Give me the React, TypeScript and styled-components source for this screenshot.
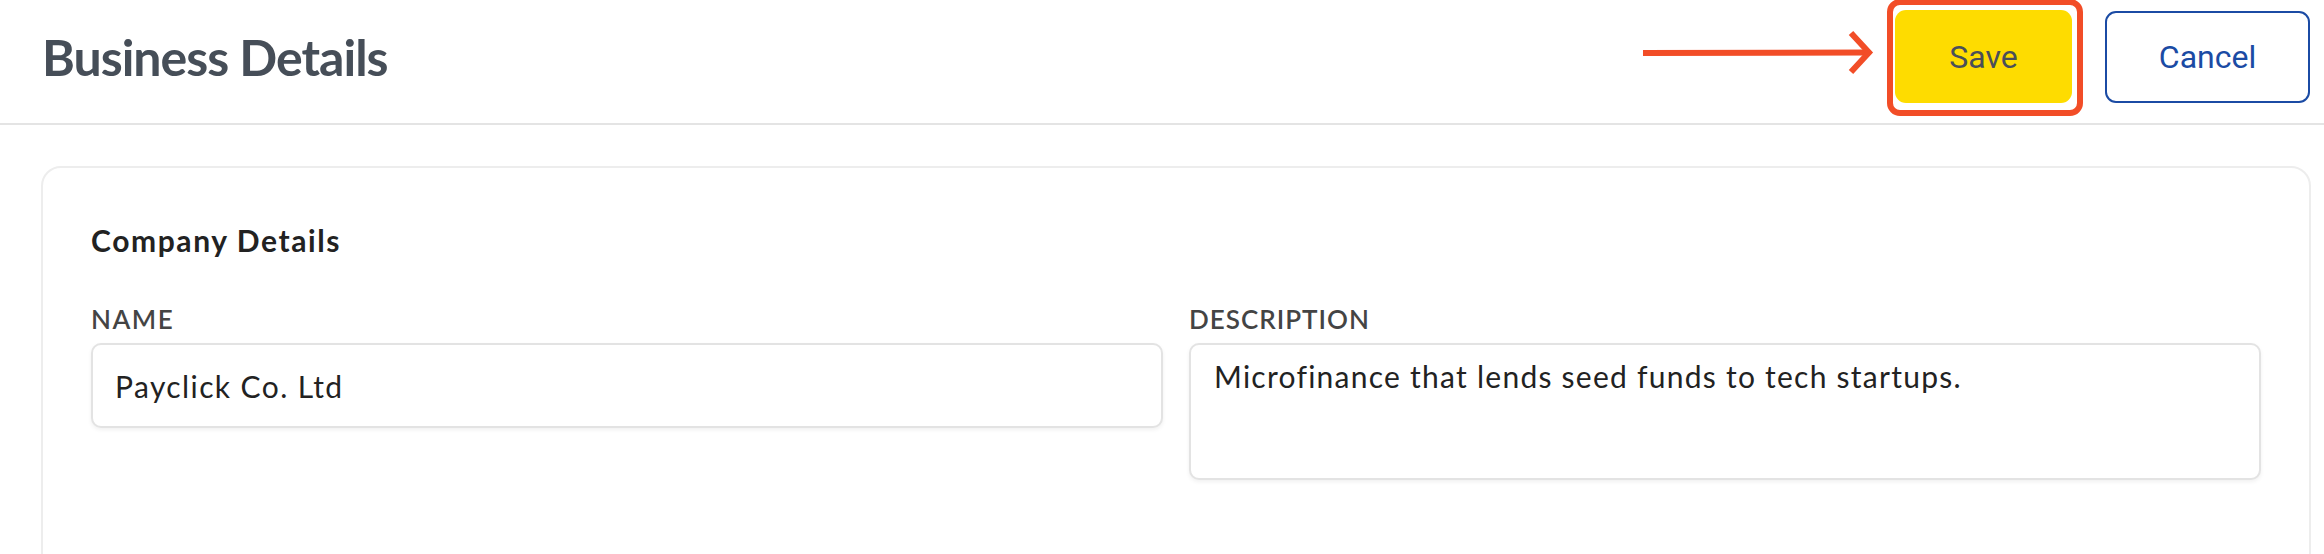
import React from "react";
import styled, { createGlobalStyle } from "styled-components";

const GlobalStyle = createGlobalStyle`
  html, body {
    margin: 0;
    padding: 0;
    background: #ffffff;
    overflow: hidden;
  }
  body {
    font-family: Lato, "Noto Sans", Arial, sans-serif;
  }
  * { box-sizing: border-box; }
`;

const Page = styled.div`
  width: 2324px;
  min-height: 554px;
  background: #ffffff;
`;

const Header = styled.header`
  display: flex;
  align-items: center;
  height: 125px;
  padding: 0 14px 10px 42px;
  border-bottom: 2px solid #e4e4e4;
`;

const Title = styled.h1`
  margin: 0;
  flex: 1;
  font-family: Lato, sans-serif;
  font-weight: 700;
  font-size: 50px;
  line-height: 60px;
  letter-spacing: -1px;
  color: #464e58;
`;

const Actions = styled.div`
  display: flex;
  align-items: center;
  align-self: stretch;
`;

const ArrowMark = styled.svg`
  display: block;
  margin-right: 11px;
`;

const Highlight = styled.div`
  align-self: flex-start;
  margin-top: -1px;
  padding: 5px 5px 7px 2px;
  border: 6px solid #f24d27;
  border-radius: 13px;
  margin-right: 22px;
`;

const Button = styled.button<{ $variant: "primary" | "outline" }>`
  display: flex;
  align-items: center;
  justify-content: center;
  height: 93px;
  border-radius: 11px;
  font-family: Roboto, Arial, sans-serif;
  font-size: 32px;
  font-weight: 400;
  cursor: pointer;
  ${(p) =>
    p.$variant === "primary"
      ? `
    width: 177px;
    background: #fedc00;
    border: none;
    color: #4a4f59;
  `
      : `
    width: 205px;
    height: 92px;
    background: #ffffff;
    border: 2px solid #1b4ba4;
    color: #1b4ba4;
  `}
`;

const Card = styled.section`
  margin: 41px 13px 0 41px;
  border: 2px solid #ededed;
  border-radius: 20px;
  padding: 54px 48px 120px;
  background: #ffffff;
`;

const SectionTitle = styled.h2`
  margin: 0 0 46px;
  font-family: Lato, sans-serif;
  font-weight: 700;
  font-size: 30px;
  line-height: 36px;
  letter-spacing: 1.6px;
  color: #222222;
`;

const FieldGrid = styled.div`
  display: grid;
  grid-template-columns: 1fr 1fr;
  column-gap: 26px;
  align-items: start;
`;

const Field = styled.label`
  display: flex;
  flex-direction: column;
  gap: 8px;
`;

const FieldLabel = styled.span<{ $spacing: number }>`
  font-family: Lato, sans-serif;
  font-weight: 600;
  font-size: 26px;
  line-height: 31px;
  letter-spacing: ${(p) => p.$spacing}px;
  color: #444444;
  text-transform: uppercase;
`;

const fieldBox = `
  width: 100%;
  border: 2px solid #e3e3e3;
  border-radius: 10px;
  background: #ffffff;
  box-shadow: 0 2px 4px rgba(0, 0, 0, 0.06);
  font-family: Lato, sans-serif;
  font-size: 30px;
  color: #222222;
  outline: none;
`;

const TextInput = styled.input`
  ${fieldBox}
  height: 85px;
  padding: 0 22px;
  letter-spacing: 1.4px;
`;

const TextArea = styled.textarea`
  ${fieldBox}
  height: 137px;
  padding: 13px 23px;
  line-height: 36px;
  letter-spacing: 1.25px;
  resize: none;
`;

export default function App() {
  return (
    <Page>
      <GlobalStyle />
      <Header>
        <Title>Business Details</Title>
        <Actions>
          <ArrowMark width="236" height="113" viewBox="0 0 236 113" aria-hidden="true">
            <line x1="3" y1="53" x2="229" y2="52.5" stroke="#f24d27" strokeWidth="6" />
            <polyline
              points="211,33 229,52.5 211,72"
              fill="none"
              stroke="#f24d27"
              strokeWidth="6"
              strokeLinejoin="miter"
            />
          </ArrowMark>
          <Highlight>
            <Button $variant="primary">Save</Button>
          </Highlight>
          <Button $variant="outline">Cancel</Button>
        </Actions>
      </Header>
      <Card>
        <SectionTitle>Company Details</SectionTitle>
        <FieldGrid>
          <Field>
            <FieldLabel $spacing={1.5}>Name</FieldLabel>
            <TextInput readOnly value="Payclick Co. Ltd" />
          </Field>
          <Field>
            <FieldLabel $spacing={1}>Description</FieldLabel>
            <TextArea readOnly value="Microfinance that lends seed funds to tech startups." />
          </Field>
        </FieldGrid>
      </Card>
    </Page>
  );
}
